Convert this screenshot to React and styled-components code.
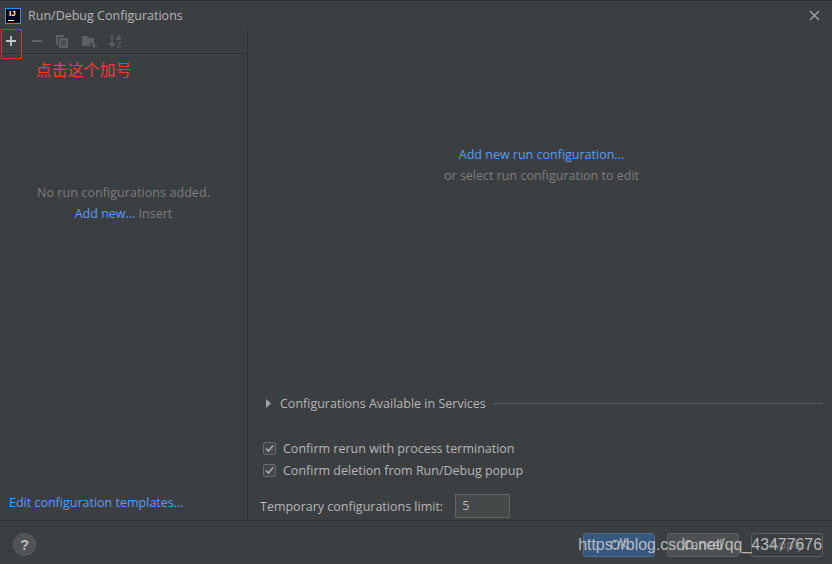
import React from "react";
import styled, { createGlobalStyle } from "styled-components";

const GlobalStyle = createGlobalStyle`
  html, body {
    margin: 0;
    padding: 0;
    background: #3c3f41;
  }
`;

const SWindow = styled.div`
  position: relative;
  width: 832px;
  height: 564px;
  display: flex;
  flex-direction: column;
  overflow: hidden;
  background: #3c3f41;
  color: #b4b6b8;
  font-family: "Open Sans", "Noto Sans", sans-serif;
  font-size: 12.5px;
`;

const STitleBar = styled.div`
  height: 30px;
  flex: none;
  display: flex;
  align-items: center;
  padding: 0 12px 0 5px;
  gap: 7px;
  border-top: 1px solid #2f3133;
  box-sizing: border-box;
`;

const STitle = styled.div`
  flex: 1;
  color: #b4b6b8;
`;

const SLogo = styled.div`
  width: 16px;
  height: 16px;
  box-sizing: border-box;
  border: 1px solid #3f8fe8;
  background: #000;
  color: #fff;
  font: bold 8px "Liberation Sans", sans-serif;
  padding: 1px 0 0 3px;
  line-height: 8px;
  position: relative;
  &::after {
    content: "";
    position: absolute;
    left: 2px;
    bottom: 2px;
    width: 6px;
    height: 1px;
    background: #fff;
  }
`;

const SBody = styled.div`
  flex: 1;
  min-height: 0;
  display: flex;
`;

const SLeft = styled.div`
  width: 247px;
  flex: none;
  display: flex;
  flex-direction: column;
  border-right: 1px solid #2f3234;
`;

const SToolbar = styled.div`
  height: 22px;
  flex: none;
  display: flex;
  align-items: center;
  padding: 0 0 1px 3px;
  gap: 10px;
  border-bottom: 1px solid #323537;
`;

const SHint = styled.div`
  color: #f03a3a;
  font-family: "Noto Sans CJK SC", sans-serif;
  font-size: 16px;
  line-height: 22px;
  padding: 4px 0 0 35.5px;
`;

const SEmpty = styled.div`
  flex: 1;
  display: flex;
  flex-direction: column;
  align-items: center;
  padding-top: 104px;
  gap: 4px;
  line-height: 17px;
  color: #7c7e80;
`;

const SEmptyTitle = styled.span`
  letter-spacing: 0.07px;
`;

const SLink = styled.span`
  color: #589df6;
`;

const STemplates = styled.div`
  padding: 0 0 9px 9px;
  line-height: 17px;
`;

const SRight = styled.div`
  flex: 1;
  display: flex;
  flex-direction: column;
  padding: 0 9px 0 12px;
`;

const SPlaceholder = styled.div`
  height: 365px;
  flex: none;
  display: flex;
  flex-direction: column;
  align-items: center;
  padding-top: 116px;
  gap: 4px;
  line-height: 17px;
  box-sizing: border-box;
  color: #7c7e80;
`;

const SSection = styled.div`
  display: flex;
  align-items: center;
  gap: 7px;
  height: 17px;
  margin-left: 5px;
`;

const STriangle = styled.svg`
  margin-right: 1px;
`;

const SRule = styled.div`
  flex: 1;
  height: 1px;
  background: #525557;
`;

const SChecks = styled.div`
  display: flex;
  flex-direction: column;
  gap: 5px;
  margin: 28px 0 0 3px;
`;

const SCheckRow = styled.label`
  display: flex;
  align-items: center;
  gap: 7px;
  height: 17px;
`;

const SBox = styled.span`
  width: 13px;
  height: 13px;
  box-sizing: border-box;
  border: 1px solid #6b6b6b;
  border-radius: 2px;
  background: #43494a;
  display: flex;
  align-items: center;
  justify-content: center;
`;

const SLimit = styled.div`
  display: flex;
  align-items: center;
  gap: 12px;
  margin-top: 15px;
`;

const SInput = styled.div`
  width: 55px;
  height: 24px;
  box-sizing: border-box;
  border: 1px solid #646464;
  background: #45494a;
  padding-left: 6px;
  line-height: 22px;
`;

const SFooter = styled.div`
  height: 44px;
  flex: none;
  display: flex;
  align-items: center;
  border-top: 1px solid #323537;
  padding: 4px 9px 0 13px;
  box-sizing: border-box;
`;

const SHelp = styled.div`
  width: 23px;
  height: 23px;
  border-radius: 50%;
  background: #505254;
  border: 1px solid #5b5d5f;
  box-sizing: border-box;
  color: #bbbbbb;
  font: bold 15px/21px "Liberation Sans", sans-serif;
  text-align: center;
`;

const SButtons = styled.div`
  margin-left: auto;
  display: flex;
  gap: 12px;
`;

const SButton = styled.div`
  width: 72px;
  height: 24px;
  box-sizing: border-box;
  border-radius: 3px;
  border: 1px solid ${(props) => (props.$primary ? "#4c708c" : "#5e6060")};
  background: ${(props) =>
    props.$primary ? "#365880" : props.$muted ? "#3c3f41" : "#4c5052"};
  color: ${(props) => (props.$muted ? "#6f7173" : "#bbbbbb")};
  text-align: center;
  line-height: 22px;
`;

const SMark = styled.div`
  position: absolute;
  left: 1px;
  top: 29px;
  width: 21px;
  height: 30px;
  box-sizing: border-box;
  border: 1px solid #e03030;
`;

const SWatermark = styled.div`
  position: absolute;
  right: 10px;
  top: 533px;
  font: 15.9px/24px "Liberation Sans", sans-serif;
  color: #c4c6c8;
  opacity: 0.9;
`;

const Tool = ({ children }) => (
  <svg width="16" height="16" viewBox="0 0 16 16" fill="none">
    {children}
  </svg>
);

const Toolbar = () => (
  <SToolbar>
    <Tool>
      <path d="M8 3v10M3 8h10" stroke="#c4c6c8" strokeWidth="1.8" />
    </Tool>
    <Tool>
      <path d="M3 8h10" stroke="#5f6264" strokeWidth="2" />
    </Tool>
    <Tool>
      <path d="M1 2h8v2H3v8H1z" fill="#5f6264" />
      <path d="M4 5h9v10H4z" fill="#5f6264" />
      <path d="M6 8h5M6 10h5M6 12h5" stroke="#3c3f41" />
    </Tool>
    <Tool>
      <path d="M1 3h5l1 2h6v5H9v3H1z" fill="#5f6264" />
      <path d="M13 10v5M10.5 12.5h5" stroke="#5f6264" strokeWidth="1.6" />
    </Tool>
    <Tool>
      <path d="M5 2v11M2 10l3 3 3-3" stroke="#5f6264" strokeWidth="1.6" />
      <path d="M10 2.5h3v4h-3v-2h3M10 9h4l-4 5h4" stroke="#5f6264" />
    </Tool>
  </SToolbar>
);

const Check = ({ label }) => (
  <SCheckRow>
    <SBox>
      <svg width="11" height="11" viewBox="0 0 11 11" fill="none">
        <path d="M2 5.5l2.5 2.5L9 2.5" stroke="#a9abad" strokeWidth="1.6" />
      </svg>
    </SBox>
    {label}
  </SCheckRow>
);

export default function App() {
  return (
    <SWindow>
      <GlobalStyle />
      <STitleBar>
        <SLogo>IJ</SLogo>
        <STitle>Run/Debug Configurations</STitle>
        <svg width="11" height="11" viewBox="0 0 11 11">
          <path d="M1 1l9 9M10 1l-9 9" stroke="#a8aaac" strokeWidth="1.2" />
        </svg>
      </STitleBar>
      <SBody>
        <SLeft>
          <Toolbar />
          <SHint>点击这个加号</SHint>
          <SEmpty>
            <SEmptyTitle>No run configurations added.</SEmptyTitle>
            <span>
              <SLink>Add new...</SLink> Insert
            </span>
          </SEmpty>
          <STemplates>
            <SLink>Edit configuration templates...</SLink>
          </STemplates>
        </SLeft>
        <SRight>
          <SPlaceholder>
            <SLink>Add new run configuration...</SLink>
            <span>or select run configuration to edit</span>
          </SPlaceholder>
          <SSection>
            <STriangle width="7" height="9" viewBox="0 0 7 9">
              <path d="M1 0l5 4.5L1 9z" fill="#a0a2a4" />
            </STriangle>
            <span>Configurations Available in Services</span>
            <SRule />
          </SSection>
          <SChecks>
            <Check label="Confirm rerun with process termination" />
            <Check label="Confirm deletion from Run/Debug popup" />
          </SChecks>
          <SLimit>
            <span>Temporary configurations limit:</span>
            <SInput>5</SInput>
          </SLimit>
        </SRight>
      </SBody>
      <SFooter>
        <SHelp>?</SHelp>
        <SButtons>
          <SButton $primary>OK</SButton>
          <SButton>Cancel</SButton>
          <SButton $muted>Apply</SButton>
        </SButtons>
      </SFooter>
      <SMark />
      <SWatermark>https://blog.csdn.net/qq_43477676</SWatermark>
    </SWindow>
  );
}
